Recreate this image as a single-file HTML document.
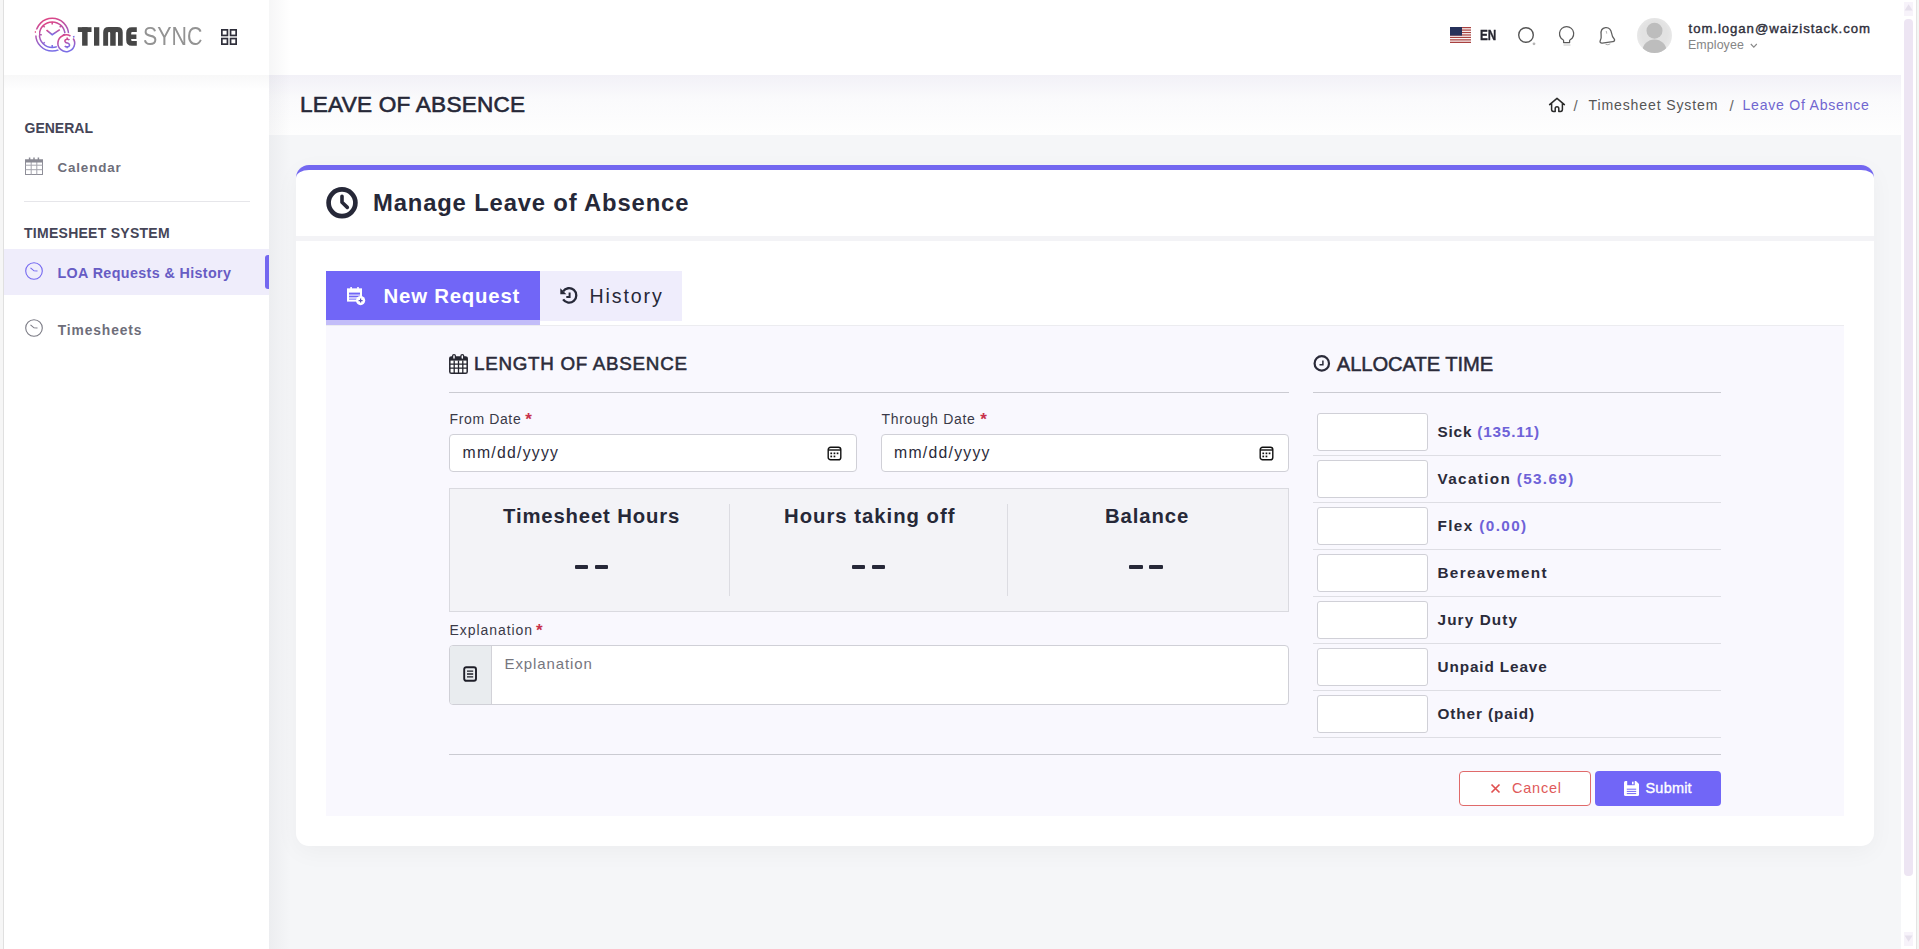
<!DOCTYPE html>
<html><head><meta charset="utf-8">
<style>
*{box-sizing:border-box;margin:0;padding:0}
html,body{width:1919px;height:949px;overflow:hidden}
body{position:relative;background:#f5f6f8;font-family:"Liberation Sans",sans-serif;color:#2f2f3b}
.a{position:absolute}
.t{position:absolute;white-space:nowrap;line-height:1}
.b{font-weight:bold}
svg{position:absolute;overflow:visible}
#lstrip{left:0;top:0;width:4px;height:949px;background:#f6f6f6;border-right:1px solid #e0e0e0}
#sidebar{left:4px;top:0;width:265px;height:949px;background:#fff}
#header{left:269px;top:0;width:1634px;height:75px;background:#fff}
#titlebar{left:269px;top:75px;width:1634px;height:60px;background:linear-gradient(#f2f1f7 0%,#fafafc 40%,#fefefe 100%)}
#scroll{left:1901px;top:0;width:16px;height:949px;background:#fff;border-right:1px solid #e4e4e4}
#scroll2{left:1917px;top:0;width:2px;height:949px;background:#f4f7f4}
#thumb{left:1904px;top:19px;width:9px;height:857px;background:#ede5f3;border-radius:4px}
#card{left:296px;top:165px;width:1578px;height:681px;background:#fff;border-radius:13px;border-top:5px solid #7367f0;box-shadow:0 6px 24px rgba(0,0,0,.04)}
#cardsep{left:296px;top:236px;width:1578px;height:5px;background:#f3f3f6}
.inp{background:#fff;border:1px solid #d0d0d7;border-radius:4px}
.dash{width:13.5px;height:4px;background:#262838;border-radius:1px}
#panel{left:326px;top:325px;width:1518px;height:491px;background:#f9f8fe;border-top:1px solid #ececf0}
</style></head><body>
<div id="lstrip" class="a"></div>
<div id="sidebar" class="a"></div>
<div id="header" class="a"></div>
<div id="titlebar" class="a"></div>
<div class="a" style="left:269px;top:0;width:22px;height:949px;background:linear-gradient(to right,rgba(40,45,60,.045),rgba(40,45,60,0))"></div>
<div id="card" class="a"></div>
<div id="cardsep" class="a"></div>
<div id="panel" class="a"></div>
<div id="scroll" class="a"></div><div id="scroll2" class="a"></div>
<div id="thumb" class="a"></div>
<div class="a" style="left:4px;top:75px;width:265px;height:16px;background:linear-gradient(rgba(40,40,60,.035),rgba(40,40,60,0))"></div>
<svg style="left:1903px;top:0" width="14" height="949" viewBox="0 0 14 949"><rect x="1" y="2" width="9" height="14" fill="#f7f3fa"/><rect x="1" y="932" width="9" height="14" fill="#f7f3fa"/><path d="M1.6 10.5 L5.6 4.2 L9.6 10.5 Z" fill="#e6e0ec"/><path d="M1.6 935.5 L5.6 941.8 L9.6 935.5 Z" fill="#e6e0ec"/></svg>


<!-- LOGO -->
<svg style="left:0;top:0" width="260" height="75" viewBox="0 0 260 75">
 <defs><linearGradient id="lg" x1="0" y1="0" x2="0.3" y2="1"><stop offset="0" stop-color="#e8407a"/><stop offset="1" stop-color="#7a6ee6"/></linearGradient>
 <mask id="mk"><rect width="260" height="75" fill="#fff"/><circle cx="67" cy="43.7" r="10.6" fill="#000"/><rect x="33" y="29.5" width="6" height="6" fill="#000"/></mask></defs>
 <g fill="none" stroke="url(#lg)" stroke-width="1.5">
  <circle cx="52.2" cy="34.7" r="16.4" mask="url(#mk)"/>
  <circle cx="52.2" cy="34.7" r="12.8" mask="url(#mk)"/>
  <path d="M46.5 30.2 L52.2 34.6 L59.8 29.6" stroke-width="1.7"/>
  <path d="M52.2 22 v2.4 M52.2 44.9 v2.4 M39.4 34.7 h2.4 M62.8 34.7 h2.4 M43.2 25.7 l1.5 1.5 M43.2 43.7 l1.5 -1.5 M61.2 25.7 l-1.5 1.5" />
  <path d="M73.2 38.5 A8.4 8.4 0 1 1 70.5 36" stroke-width="1.6"/>
  <path d="M69.4 40 c-0.8 -1 -3.8 -1.2 -4.4 0.4 c-0.6 1.7 1.4 2.4 2.4 2.7 c1.2 0.4 2.6 1.1 2 2.7 c-0.6 1.5 -3.6 1.4 -4.6 0.2 M67.2 37.6 v1.8 M67.2 46.4 v1.9" stroke-width="1.6"/>
  <path d="M34.8 32 h1.2 M73 37 l1.5 -0.5"/>
 </g>
</svg>
<svg style="left:0;top:0" width="140" height="60" viewBox="0 0 140 60"><g fill="#464646">
 <rect x="77.8" y="27.2" width="13.7" height="4.8"/><rect x="82.1" y="27.2" width="5.5" height="18.5"/>
 <rect x="94" y="27.2" width="5.3" height="18.5"/>
 <path d="M103.2 45.7 V32.2 Q103.2 27 108.6 27 H117.4 Q122.7 27 122.7 32.2 V45.7 H118 V33 Q118 32 117.2 32 H116.5 Q115.7 32 115.7 33 V45.7 H110.2 V33 Q110.2 32 109.4 32 H108.9 Q108.1 32 108.1 33 V45.7 Z"/>
 <path d="M136.8 27.2 H131.8 Q126.2 27.2 126.2 33 V39.9 Q126.2 45.7 131.8 45.7 H136.8 V41 H132.2 Q131.2 41 131.2 40 V39.1 H136.4 V34.4 H131.2 V33 Q131.2 32 132.2 32 H136.8 Z"/>
</g></svg>
<div class="t" style="left:143px;top:24.3px;font-size:25.5px;color:#939393;transform:scaleX(0.84);transform-origin:0 0">SYNC</div>
<svg style="left:221px;top:29px" width="16" height="16" viewBox="0 0 16 16"><g fill="none" stroke="#2f2f3b" stroke-width="1.7"><rect x="0.85" y="0.85" width="5.6" height="5.6"/><rect x="9.55" y="0.85" width="5.6" height="5.6"/><rect x="0.85" y="9.55" width="5.6" height="5.6"/><rect x="9.55" y="9.55" width="5.6" height="5.6"/></g></svg>

<!-- SIDEBAR -->
<div class="t b" style="left:24.5px;top:121px;font-size:14px;color:#454557">GENERAL</div>
<svg style="left:25px;top:157px" width="18" height="18" viewBox="0 0 18 18"><g fill="none" stroke="#8e8e98" stroke-width="1"><rect x="0.5" y="3" width="17" height="14.5"/><path d="M0.5 8.2h17M0.5 12.7h17M6.2 5v12.5M11.8 5v12.5" stroke="#a4a4ad"/></g><rect x="0" y="2.5" width="18" height="3" fill="#8a8a94"/><path d="M4.6 0.4v2.6M9 0.4v2.6M13.4 0.4v2.6" stroke="#8a8a94" stroke-width="1.5"/></svg>
<div class="t b" style="left:57.5px;top:161.2px;font-size:13.4px;color:#6e6e7a;letter-spacing:0.84px">Calendar</div>
<div class="a" style="left:24px;top:201px;width:226px;height:1px;background:#e6e6ea"></div>
<div class="t b" style="left:24px;top:226.1px;font-size:14px;color:#454557;letter-spacing:0.27px">TIMESHEET SYSTEM</div>
<div class="a" style="left:4px;top:249px;width:265px;height:46px;background:#efedfb"></div>
<div class="a" style="left:265px;top:255px;width:4px;height:34px;background:#7367f0;border-radius:3px 0 0 3px"></div>
<svg style="left:25px;top:262px" width="18" height="18" viewBox="0 0 18 18"><g fill="none" stroke="#7367f0" stroke-width="1.1"><circle cx="9" cy="9" r="8.3"/><path d="M5.5 5.8 L9 8.8 L12.5 9"/></g></svg>
<div class="t b" style="left:57.5px;top:266px;font-size:14.3px;color:#675cc4;letter-spacing:0.38px">LOA Requests &amp; History</div>
<svg style="left:25px;top:319px" width="18" height="18" viewBox="0 0 18 18"><g fill="none" stroke="#7a7a84" stroke-width="1.1"><circle cx="9" cy="9" r="8.3"/><path d="M5.5 5.8 L9 8.8 L12.5 9"/></g></svg>
<div class="t b" style="left:57.8px;top:324px;font-size:13.8px;color:#6e6e7a;letter-spacing:0.89px">Timesheets</div>

<!-- HEADER RIGHT -->
<svg style="left:1450px;top:27px" width="21" height="16" viewBox="0 0 21 16">
 <rect width="21" height="16" fill="#fff"/>
 <g fill="#a8413f"><rect y="0" width="21" height="1.25"/><rect y="2.45" width="21" height="1.25"/><rect y="4.9" width="21" height="1.25"/><rect y="7.35" width="21" height="1.25"/><rect y="9.8" width="21" height="1.25"/><rect y="12.25" width="21" height="1.25"/><rect y="14.7" width="21" height="1.3"/></g>
 <rect width="12" height="8.6" fill="#26315a"/>
</svg>
<div class="t b" style="left:1480px;top:28.2px;font-size:14px;color:#262630;-webkit-text-stroke:0.35px #262630;transform:scaleX(0.84);transform-origin:0 0">EN</div>
<svg style="left:1510px;top:20px" width="110" height="30" viewBox="0 0 110 30">
 <g fill="none" stroke="#555" stroke-width="1.4">
  <circle cx="16" cy="15" r="7.3"/>
  <path d="M53.6 22.6 V20.6 C53.6 19.7 51.6 19 50.8 17.8 A7.1 7.1 0 1 1 62.4 17.8 C61.6 19 59.6 19.7 59.6 20.6 V22.6 Z" stroke-linejoin="round" stroke="#5a5a5a" stroke-width="1.25"/>
  <path transform="rotate(-8 96.5 15)" d="M96.5 7.6 C92.6 7.6 91.2 10.8 91.2 14 C91.2 17.4 90.4 18.8 89.4 20 C88.6 21.2 89.6 22.4 91.2 22.4 H101.8 C103.4 22.4 104.4 21.2 103.6 20 C102.6 18.8 101.8 17.4 101.8 14 C101.8 10.8 100.4 7.6 96.5 7.6 Z" stroke="#606060" stroke-width="1.3"/>
 </g>
 <circle cx="24" cy="23.8" r="1.4" fill="#b5b5b5"/>
 <path d="M53.5 25 H60.5" stroke="#c8c8c8" stroke-width="1"/>
 <path d="M95.5 24.2 Q98 25.6 100.3 23.8" stroke="#aaa" stroke-width="1" fill="none"/>
 <path d="M96.2 11 l0.6 2.6" stroke="#bbb" stroke-width="1.1"/>
</svg>
<svg style="left:1637px;top:18px" width="35" height="35" viewBox="0 0 35 35">
 <defs><radialGradient id="av" cx="0.5" cy="0.45" r="0.6"><stop offset="0.6" stop-color="#e2e2e2"/><stop offset="1" stop-color="#ececec"/></radialGradient><clipPath id="avc"><circle cx="17.5" cy="17.5" r="17.5"/></clipPath></defs>
 <circle cx="17.5" cy="17.5" r="17.5" fill="url(#av)"/>
 <g clip-path="url(#avc)" fill="#bdbdbd"><circle cx="17.5" cy="12.7" r="8"/><ellipse cx="17.5" cy="33" rx="12" ry="11.5"/></g>
</svg>
<div class="t" style="left:1688.6px;top:21.6px;font-size:13.2px;color:#2f2f3b;-webkit-text-stroke:0.4px #2f2f3b;letter-spacing:0.93px">tom.logan@waizistack.com</div>
<div class="t" style="left:1688px;top:39.2px;font-size:12.4px;color:#858585;letter-spacing:0.1px">Employee</div>
<svg style="left:1750px;top:43px" width="8" height="6" viewBox="0 0 8 6"><path d="M0.8 1 L3.8 4.2 L6.8 1" fill="none" stroke="#888" stroke-width="1.1"/></svg>

<!-- TITLE BAR -->
<div class="t" style="left:300px;top:93.7px;font-size:22.6px;color:#262838;-webkit-text-stroke:0.6px #262838;letter-spacing:0.22px">LEAVE OF ABSENCE</div>
<svg style="left:1548px;top:97px" width="18" height="16" viewBox="0 0 18 16"><path d="M1.6 7.6 L9 1.4 L16.4 7.6 M3.6 6.4 V12.6 Q3.6 14.4 5.4 14.4 H7.2 V11.6 A1.8 1.8 0 0 1 10.8 11.6 V14.4 H12.6 Q14.4 14.4 14.4 12.6 V6.4" fill="none" stroke="#2a2a2a" stroke-width="1.5" stroke-linejoin="round" stroke-linecap="round"/></svg>
<div class="t" style="left:1573.5px;top:97.6px;font-size:15px;color:#666">/</div>
<div class="t" style="left:1588.5px;top:98.1px;font-size:14.1px;color:#555;letter-spacing:0.85px">Timesheet System</div>
<div class="t" style="left:1729.5px;top:97.6px;font-size:15px;color:#666">/</div>
<div class="t" style="left:1742.5px;top:98.1px;font-size:14.1px;color:#7166d0;letter-spacing:0.75px">Leave Of Absence</div>

<!-- CARD HEADER -->
<svg style="left:326px;top:187px" width="32" height="32" viewBox="0 0 32 32"><g fill="none" stroke="#262838" stroke-width="4.7" stroke-linecap="round" stroke-linejoin="round"><circle cx="16" cy="15.8" r="13.4"/><path d="M16 9.2 V15.3 L21.3 20.4" stroke-width="3.6"/></g></svg>
<div class="t b" style="left:373px;top:190.5px;font-size:23.8px;color:#262838;letter-spacing:0.85px">Manage Leave of Absence</div>

<!-- TABS -->
<div class="a" style="left:326px;top:271px;width:214px;height:50px;background:#7166f7"></div>
<div class="a" style="left:326px;top:320px;width:214px;height:5px;background:#c3bdf9"></div>
<div class="a" style="left:540px;top:271px;width:142px;height:50px;background:#efedfc"></div>
<svg style="left:346px;top:286px" width="21" height="21" viewBox="0 0 21 21">
 <rect x="2" y="3.6" width="13" height="11" fill="none" stroke="#fff" stroke-width="2"/>
 <rect x="1" y="2.6" width="15" height="4" fill="#fff"/>
 <rect x="4.3" y="1" width="1.6" height="2.6" fill="#fff"/><rect x="11.2" y="1" width="1.6" height="2.6" fill="#fff"/>
 <path d="M3 9.2 H14 M3 12 H12" stroke="#e6e3fd" stroke-width="1.3"/>
 <circle cx="14.6" cy="14.6" r="4.6" fill="#fff"/>
 <path d="M14.6 12.6 v4 M12.6 14.6 h4" stroke="#5a52b8" stroke-width="1.2"/>
</svg>
<div class="t b" style="left:383.5px;top:285.7px;font-size:20.4px;color:#fff;letter-spacing:0.78px">New Request</div>
<svg style="left:559px;top:286px" width="19" height="19" viewBox="0 0 19 19"><g fill="none" stroke="#262838" stroke-width="2.3"><path d="M4.1 5.4 A7.2 7.2 0 1 1 4.1 13.4"/><path d="M10.6 6.6 V11 H7.3" stroke-width="2"/></g><path d="M1.3 2.2 L1.3 8.3 L7.4 8.3 Z" fill="#262838"/></svg>
<div class="t" style="left:589.5px;top:286.8px;font-size:19.6px;color:#262838;letter-spacing:1.87px">History</div>

<!-- PANEL LEFT -->
<svg style="left:449px;top:354px" width="19" height="20" viewBox="0 0 19 20">
 <rect x="0.8" y="3" width="17.4" height="16.3" rx="1.6" fill="#fff" stroke="#262630" stroke-width="1.5"/>
 <rect x="0.8" y="3" width="17.4" height="3.6" fill="#262630"/>
 <path d="M0.8 10.2 H18.2 M0.8 14.2 H18.2 M5.2 6.5 V19.3 M9.5 6.5 V19.3 M13.8 6.5 V19.3" stroke="#262630" stroke-width="1.3"/>
 <rect x="3.6" y="0.7" width="2.8" height="4.8" rx="1.4" fill="#f9f8fe" stroke="#262630" stroke-width="1.3"/>
 <rect x="11.9" y="0.7" width="2.8" height="4.8" rx="1.4" fill="#f9f8fe" stroke="#262630" stroke-width="1.3"/>
</svg>
<div class="t" style="left:474px;top:355px;font-size:18.8px;color:#2b2b3a;-webkit-text-stroke:0.55px #2b2b3a;letter-spacing:0.72px">LENGTH OF ABSENCE</div>
<div class="a" style="left:449px;top:392px;width:840px;height:1px;background:#cbcbd2"></div>

<div class="t" style="left:449.5px;top:412.1px;font-size:14px;color:#3a3a48;letter-spacing:0.63px">From Date</div>
<div class="t b" style="left:525.3px;top:410.5px;font-size:17px;color:#c8324c">*</div>
<div class="a inp" style="left:449px;top:434px;width:407.5px;height:37.5px"></div>
<div class="t" style="left:462.5px;top:444.5px;font-size:15.8px;color:#2b2b3a;letter-spacing:1.25px">mm/dd/yyyy</div>
<svg class="cal" style="left:826.5px;top:445.5px" width="15" height="15" viewBox="0 0 15 15"><g fill="none" stroke="#111" stroke-width="1.4"><rect x="1.2" y="1.2" width="12.6" height="12.6" rx="2.4"/><path d="M1.2 4 H13.8"/></g><g fill="#111"><rect x="3.4" y="6.5" width="1.7" height="1.7"/><rect x="6.6" y="6.5" width="1.7" height="1.7"/><rect x="9.7" y="6.5" width="1.7" height="1.7"/><rect x="3.4" y="9.6" width="1.7" height="1.7"/><rect x="6.6" y="9.6" width="1.7" height="1.7"/></g></svg>

<div class="t" style="left:881.5px;top:412.1px;font-size:14px;color:#3a3a48;letter-spacing:0.7px">Through Date</div>
<div class="t b" style="left:980.3px;top:410.5px;font-size:17px;color:#c8324c">*</div>
<div class="a inp" style="left:881px;top:434px;width:408px;height:37.5px"></div>
<div class="t" style="left:894px;top:444.5px;font-size:15.8px;color:#2b2b3a;letter-spacing:1.25px">mm/dd/yyyy</div>
<svg class="cal" style="left:1258.5px;top:445.5px" width="15" height="15" viewBox="0 0 15 15"><g fill="none" stroke="#111" stroke-width="1.4"><rect x="1.2" y="1.2" width="12.6" height="12.6" rx="2.4"/><path d="M1.2 4 H13.8"/></g><g fill="#111"><rect x="3.4" y="6.5" width="1.7" height="1.7"/><rect x="6.6" y="6.5" width="1.7" height="1.7"/><rect x="9.7" y="6.5" width="1.7" height="1.7"/><rect x="3.4" y="9.6" width="1.7" height="1.7"/><rect x="6.6" y="9.6" width="1.7" height="1.7"/></g></svg>

<div class="a" style="left:449px;top:488px;width:840px;height:123.5px;background:#f3f3f7;border:1px solid #dadae0"></div>
<div class="a" style="left:729px;top:504px;width:1px;height:92px;background:#dcdce2"></div>
<div class="a" style="left:1007px;top:504px;width:1px;height:92px;background:#dcdce2"></div>
<div class="t b" style="left:503px;top:505.8px;font-size:20.3px;color:#262838;letter-spacing:0.86px">Timesheet Hours</div>
<div class="t b" style="left:784px;top:505.8px;font-size:20.3px;color:#262838;letter-spacing:1.0px">Hours taking off</div>
<div class="t b" style="left:1105px;top:505.8px;font-size:20.3px;color:#262838;letter-spacing:0.92px">Balance</div>
<div class="a dash" style="left:574.5px;top:565px"></div><div class="a dash" style="left:594.5px;top:565px"></div>
<div class="a dash" style="left:851.7px;top:565px"></div><div class="a dash" style="left:871.7px;top:565px"></div>
<div class="a dash" style="left:1129.2px;top:565px"></div><div class="a dash" style="left:1149.2px;top:565px"></div>

<div class="t" style="left:449.5px;top:622.9px;font-size:14px;color:#3a3a48;letter-spacing:0.94px">Explanation</div>
<div class="t b" style="left:536px;top:621.5px;font-size:17px;color:#c8324c">*</div>
<div class="a inp" style="left:449px;top:645px;width:840px;height:60px;background:#fff"></div>
<div class="a" style="left:450px;top:646px;width:41.5px;height:58px;background:#e9ecef;border-right:1px solid #d2d2d8;border-radius:3px 0 0 3px"></div>
<svg style="left:462.5px;top:666px" width="15" height="16" viewBox="0 0 15 16"><g fill="none" stroke="#1e1e28" stroke-width="1.9"><rect x="1.2" y="1.2" width="11.8" height="13.6" rx="2"/></g><path d="M4 5.2 H10.2 M4 8 H10.2 M4 10.8 H10.2" stroke="#1e1e28" stroke-width="1.3"/></svg>
<div class="t" style="left:504.5px;top:656px;font-size:15px;color:#76767e;letter-spacing:0.9px">Explanation</div>

<!-- PANEL RIGHT -->
<svg style="left:1312.5px;top:355px" width="18" height="17" viewBox="0 0 18 17"><g fill="none" stroke="#2b2b3a" stroke-width="2.2"><circle cx="8.8" cy="8.4" r="7.2"/><path d="M9.9 5.4 V9.7 H6.5" stroke-width="1.5"/></g></svg>
<div class="t" style="left:1336.8px;top:354px;font-size:20.2px;color:#2b2b3a;-webkit-text-stroke:0.5px #2b2b3a;letter-spacing:-0.08px">ALLOCATE TIME</div>
<div class="a" style="left:1313px;top:392px;width:408px;height:1px;background:#cbcbd2"></div>
<div class="a inp" style="left:1316.8px;border-radius:3px;top:413px;width:111px;height:37.5px"></div>
<div class="t b" style="left:1437.5px;top:423.7px;font-size:15.3px;color:#2b2b3a;letter-spacing:0.81px">Sick <span style="color:#6e62d8">(135.11)</span></div>
<div class="a" style="left:1313px;top:455px;width:408px;height:1px;background:#dedee4"></div>
<div class="a inp" style="left:1316.8px;border-radius:3px;top:460px;width:111px;height:37.5px"></div>
<div class="t b" style="left:1437.5px;top:470.7px;font-size:15.3px;color:#2b2b3a;letter-spacing:1.34px">Vacation <span style="color:#6e62d8">(53.69)</span></div>
<div class="a" style="left:1313px;top:502px;width:408px;height:1px;background:#dedee4"></div>
<div class="a inp" style="left:1316.8px;border-radius:3px;top:507px;width:111px;height:37.5px"></div>
<div class="t b" style="left:1437.5px;top:517.7px;font-size:15.3px;color:#2b2b3a;letter-spacing:1.38px">Flex <span style="color:#6e62d8">(0.00)</span></div>
<div class="a" style="left:1313px;top:549px;width:408px;height:1px;background:#dedee4"></div>
<div class="a inp" style="left:1316.8px;border-radius:3px;top:554px;width:111px;height:37.5px"></div>
<div class="t b" style="left:1437.5px;top:564.7px;font-size:15.3px;color:#2b2b3a;letter-spacing:1.3px">Bereavement</div>
<div class="a" style="left:1313px;top:596px;width:408px;height:1px;background:#dedee4"></div>
<div class="a inp" style="left:1316.8px;border-radius:3px;top:601px;width:111px;height:37.5px"></div>
<div class="t b" style="left:1437.5px;top:611.7px;font-size:15.3px;color:#2b2b3a;letter-spacing:1.12px">Jury Duty</div>
<div class="a" style="left:1313px;top:643px;width:408px;height:1px;background:#dedee4"></div>
<div class="a inp" style="left:1316.8px;border-radius:3px;top:648px;width:111px;height:37.5px"></div>
<div class="t b" style="left:1437.5px;top:658.7px;font-size:15.3px;color:#2b2b3a;letter-spacing:0.89px">Unpaid Leave</div>
<div class="a" style="left:1313px;top:690px;width:408px;height:1px;background:#dedee4"></div>
<div class="a inp" style="left:1316.8px;border-radius:3px;top:695px;width:111px;height:37.5px"></div>
<div class="t b" style="left:1437.5px;top:705.7px;font-size:15.3px;color:#2b2b3a;letter-spacing:0.9px">Other (paid)</div>
<div class="a" style="left:1313px;top:737px;width:408px;height:1px;background:#dedee4"></div>

<div class="a" style="left:449px;top:754px;width:1272px;height:1px;background:#cbcbd2"></div>

<!-- BUTTONS -->
<div class="a" style="left:1459px;top:771px;width:132px;height:35px;border:1px solid #e06a6a;border-radius:4px;background:#fff"></div>
<svg style="left:1489.5px;top:782.5px" width="11" height="11" viewBox="0 0 11 11"><path d="M1.5 1.5 L9.5 9.5 M9.5 1.5 L1.5 9.5" stroke="#e05050" stroke-width="1.7"/></svg>
<div class="t" style="left:1512px;top:780.7px;font-size:14.5px;color:#e05a5a;letter-spacing:0.78px">Cancel</div>
<div class="a" style="left:1595px;top:771px;width:126px;height:35px;background:#7166f7;border-radius:4px"></div>
<svg style="left:1623.5px;top:781px" width="16" height="15" viewBox="0 0 16 15"><path d="M0 1.5 Q0 0 1.5 0 H12 L15 3 V13.5 Q15 15 13.5 15 H1.5 Q0 15 0 13.5 Z" fill="#fff"/><rect x="3.2" y="0" width="7.5" height="4.2" fill="#7166f7"/><rect x="8" y="0.7" width="1.6" height="2.6" fill="#fff"/><path d="M2.8 8.2 H12.2 M2.8 10.4 H12.2 M2.8 12.6 H12.2" stroke="#7166f7" stroke-width="1"/></svg>
<div class="t" style="left:1645.5px;top:780.7px;font-size:14.5px;color:#fff;-webkit-text-stroke:0.35px #fff;letter-spacing:0.2px">Submit</div>

</body></html>
